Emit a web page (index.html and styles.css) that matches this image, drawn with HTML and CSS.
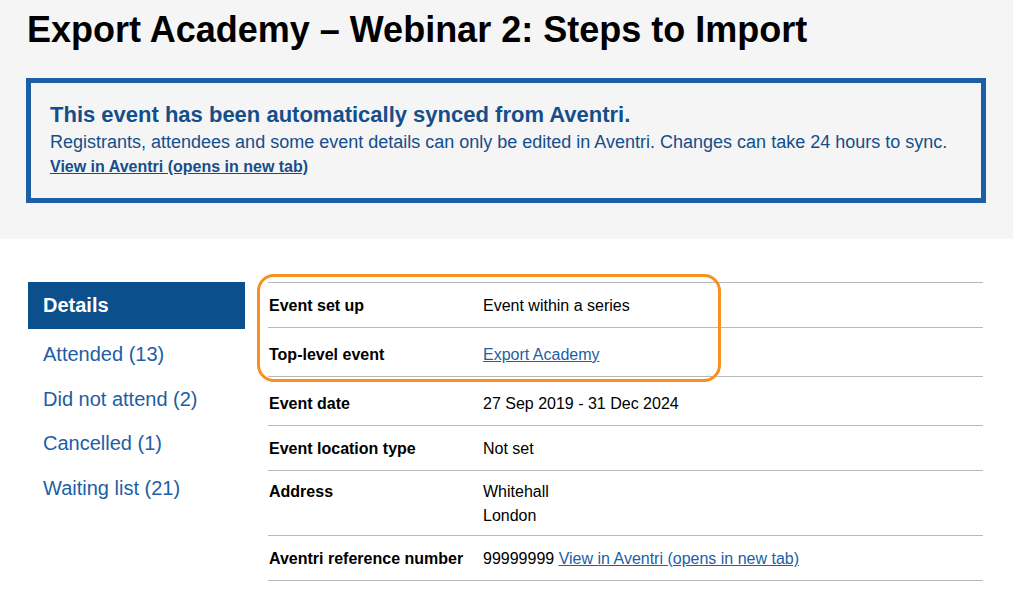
FILE: index.html
```html
<!DOCTYPE html>
<html lang="en">
<head>
<meta charset="utf-8">
<title>Export Academy – Webinar 2: Steps to Import</title>
<link rel="stylesheet" href="styles.css">
</head>
<body>
<header class="page-header">
  <h1 class="page-title">Export Academy – Webinar 2: Steps to Import</h1>
  <div class="sync-banner">
    <h2 class="sync-title">This event has been automatically synced from Aventri.</h2>
    <p class="sync-text">Registrants, attendees and some event details can only be edited in Aventri. Changes can take 24 hours to sync.</p>
    <a class="sync-link" href="#">View in Aventri (opens in new tab)</a>
  </div>
</header>
<main class="content">
  <nav class="side-nav">
    <a class="side-item is-active" href="#">Details</a>
    <a class="side-item" href="#">Attended (13)</a>
    <a class="side-item" href="#">Did not attend (2)</a>
    <a class="side-item" href="#">Cancelled (1)</a>
    <a class="side-item" href="#">Waiting list (21)</a>
  </nav>
  <section class="details">
    <div class="details-row">
      <div class="details-key">Event set up</div>
      <div class="details-value">Event within a series</div>
    </div>
    <div class="details-row roomy">
      <div class="details-key">Top-level event</div>
      <div class="details-value"><a class="link" href="#">Export Academy</a></div>
    </div>
    <div class="details-row roomy">
      <div class="details-key">Event date</div>
      <div class="details-value">27 Sep 2019 - 31 Dec 2024</div>
    </div>
    <div class="details-row">
      <div class="details-key">Event location type</div>
      <div class="details-value">Not set</div>
    </div>
    <div class="details-row compact">
      <div class="details-key">Address</div>
      <div class="details-value">Whitehall<br>London</div>
    </div>
    <div class="details-row">
      <div class="details-key">Aventri reference number</div>
      <div class="details-value">99999999 <a class="link" href="#">View in Aventri (opens in new tab)</a></div>
    </div>
    <div class="highlight" aria-hidden="true"></div>
  </section>
</main>
</body>
</html>
```
FILE: styles.css
```css
* { box-sizing: border-box; }

body {
  margin: 0;
  font-family: "Liberation Sans", Arial, Helvetica, sans-serif;
  color: #0b0c0c;
  background: #ffffff;
}

.page-header {
  background: #f5f5f5;
  padding: 8px 27px 36px 26px;
}

.page-title {
  margin: 0 0 27px 1px;
  font-size: 36px;
  line-height: 43px;
  font-weight: 700;
  color: #000;
}

.sync-banner {
  border: 5px solid #1d5ea6;
  padding: 18px 19px 19px 19px;
  color: #144e8b;
}

.sync-title {
  margin: 0 0 2px;
  font-size: 22px;
  line-height: 27px;
  font-weight: 700;
}

.sync-text {
  margin: 0;
  font-size: 18px;
  line-height: 25px;
}

.sync-link {
  display: inline-block;
  font-size: 16px;
  line-height: 24px;
  font-weight: 700;
  color: #144e8b;
  text-decoration: underline;
}

.content {
  display: flex;
  gap: 23px;
  padding: 43px 30px 0 28px;
}

.side-nav {
  width: 217px;
  flex: none;
  display: flex;
  flex-direction: column;
}

.side-item {
  display: block;
  padding: 13px 15px 7.5px;
  font-size: 20px;
  line-height: 24px;
  color: #1d5ea5;
  text-decoration: none;
}

.side-item.is-active {
  padding: 11px 15px 12px;
  background: #0b4f8c;
  color: #fff;
  font-weight: 700;
}

.details {
  position: relative;
  flex: 1;
  border-top: 1px solid #b9b9b9;
  font-size: 16px;
  line-height: 24px;
}

.details-row {
  display: grid;
  grid-template-columns: 215px 1fr;
  padding: 11px 0 9px;
  border-bottom: 1px solid #b9b9b9;
}

.details-row.roomy { padding: 15px 0 9px; }
.details-row.compact { padding: 9px 0 7px; }

.details-key {
  font-weight: 700;
  padding-left: 1px;
  color: #000;
}

.details-value { color: #000; }

.link {
  color: #1d5ea5;
  text-decoration: underline;
}

.highlight {
  position: absolute;
  left: -11px;
  top: -9px;
  width: 464px;
  height: 108px;
  border: 3px solid #f7901e;
  border-radius: 17px;
  pointer-events: none;
}
```
